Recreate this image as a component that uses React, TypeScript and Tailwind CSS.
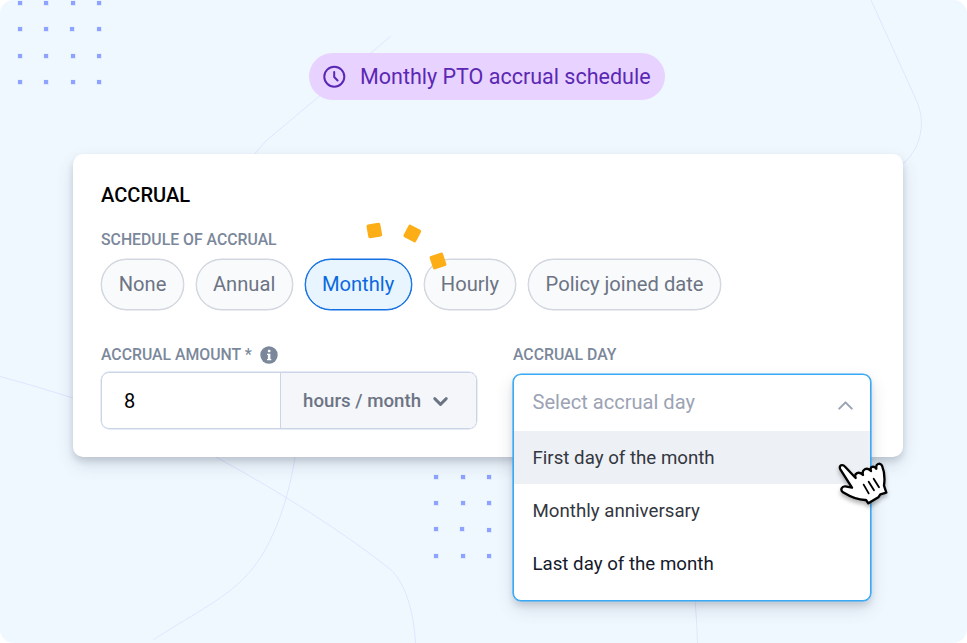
import { ChevronDown, ChevronUp } from "lucide-react";

const schedules = ["None", "Annual", "Monthly", "Hourly", "Policy joined date"];

const dayOptions = [
  { label: "First day of the month", style: "bg-[#edf0f5] text-[#33373f]" },
  { label: "Monthly anniversary", style: "text-[#33373f]" },
  { label: "Last day of the month", style: "text-[#14192b]" },
];

const dots = [
  [18, 1], [44, 1], [71, 1], [97, 1],
  [18, 27], [44, 27], [70, 27], [97, 27],
  [18, 54], [44, 54], [71, 54], [97, 54],
  [18, 80], [44, 80], [71, 80], [97, 80],
  [434, 475], [461, 475], [487, 475],
  [434, 501], [461, 501], [487, 501],
  [434, 527], [460, 527], [487, 528],
  [434, 554], [461, 554], [487, 554],
];

function Backdrop() {
  return (
    <svg className="absolute inset-0" width="967" height="643" viewBox="0 0 967 643" fill="none">
      <g stroke="#e0e5ff" strokeWidth="1">
        <path d="M391 36L267 140Q260 147 254 155" />
        <path d="M871 0L918 104Q922 114 921.500 126Q920 149 903 164" />
        <path d="M0 376.500Q36 386 73 398" />
        <path d="M216 457Q320 514 390 569C405 582 414 612 415.500 643" />
        <path d="M295 457C290 490 276 545 246 576C224 600 186 618 153 640" />
        <path d="M695 600Q697 622 697.500 643" />
      </g>
      {dots.map(([x, y]) => (
        <g key={`${x}-${y}`}>
          <rect x={x - 0.3} y={y - 0.3} width="5" height="5" fill="#8ea2ff" opacity="0.25" />
          <rect x={x} y={y} width="4" height="4" fill="#8ea2ff" />
        </g>
      ))}
    </svg>
  );
}

function ClockIcon() {
  return (
    <svg width="24" height="24" viewBox="0 0 24 24" fill="none" stroke="#5b28b4" strokeWidth="2">
      <circle cx="12.300" cy="11.700" r="10" />
      <path d="M12.200 7V12L15.600 15.500" strokeLinecap="round" strokeLinejoin="round" />
    </svg>
  );
}

function InfoIcon() {
  return (
    <svg width="18" height="18" viewBox="0 0 18 18">
      <circle cx="9" cy="9" r="8.700" fill="#7b889b" />
      <rect x="7.900" y="3.800" width="2.500" height="2.400" fill="#fff" />
      <path d="M7 7.700H10.400V13H11.300V14.300H7V13H7.900V9H7Z" fill="#fff" />
    </svg>
  );
}

function Sparks() {
  return (
    <svg className="absolute left-[288px] top-[64px]" width="90" height="56" viewBox="0 0 90 56" fill="#fdae16">
      <rect x="6.300" y="5.500" width="14" height="14" rx="1.800" transform="rotate(-10 13.300 12.500)" />
      <rect x="44.300" y="8.500" width="14" height="14" rx="1.800" transform="rotate(28 51.300 15.500)" />
      <rect x="70" y="36" width="14" height="14" rx="1.800" transform="rotate(-18 77 43)" />
    </svg>
  );
}

function HandCursor() {
  return (
    <svg
      className="absolute left-[317px] top-[106px] drop-shadow-[0_3px_2px_rgba(0,0,0,0.3)]"
      width="70"
      height="65"
      viewBox="0 0 210 195"
      fill="none"
      stroke="#000"
      strokeWidth="7"
      strokeLinecap="round"
      strokeLinejoin="round"
    >
      <path
        d="M31 58C25 46 37 41 46 51L77 84C71 70 87 62 99 75C94 59 111 49 123 63C118 50 131 46 139 56C136 41 150 37 156 47C164 66 165 85 162 107L169 128L151 133L145 142L115 160L108 150C86 151 62 141 39 127C29 119 36 108 46 109L66 113Z"
        fill="#fff"
      />
      <path d="M101 104L116 130M116 95L132 121M131 86L147 112" strokeWidth="5.500" />
    </svg>
  );
}

export default function App() {
  return (
    <div className="bg-white">
      <div className="relative flex h-[643px] w-[967px] flex-col overflow-hidden rounded-[14px] bg-[#f0f8ff] font-[Roboto,sans-serif]">
        <Backdrop />

        <div className="relative ml-[309px] mt-[53px] flex h-[47px] w-[356px] items-center gap-[14px] rounded-full bg-[#e8d2ff] pl-[13px]">
          <ClockIcon />
          <span className="whitespace-nowrap pt-[2px] text-[21.5px] text-[#5b28b4]">Monthly PTO accrual schedule</span>
        </div>

        <div className="relative ml-[72.5px] mt-[54px] flex h-[303px] w-[830px] flex-col rounded-[10px] bg-white pl-[28.5px] pr-7 shadow-[0_4px_6px_rgba(30,40,60,0.14),0_8px_18px_rgba(30,40,70,0.14)]">
          <h1 className="mt-[29px] text-[20.1px] font-medium leading-6 text-black">ACCRUAL</h1>
          <h2 className="mt-[23px] text-[15.8px] font-medium leading-5 text-[#7b889b]">SCHEDULE OF ACCRUAL</h2>
          <div className="mt-[9px] flex gap-3 pl-[0.4px]">
            {schedules.map((name) => (
              <button
                key={name}
                className={`h-[51px] whitespace-nowrap rounded-full border px-[16.3px] pb-px text-[20.15px] ${
                  name === "Monthly"
                    ? "border-[#1270e3] bg-[#e8f5ff] text-[#0b69df] shadow-[0_0_0_0.4px_#1270e3]"
                    : "border-[#d2d6de] bg-[#f9fafc] text-[#6c7484] shadow-[0_0_0_0.4px_#d2d6de]"
                }`}
              >
                {name}
              </button>
            ))}
          </div>
          <Sparks />

          <div className="mt-[34px] flex gap-9">
            <div className="w-[376px]">
              <div className="flex h-[22px] items-center gap-2 text-[15.8px] font-medium text-[#7b889b]">
                ACCRUAL AMOUNT *
                <InfoIcon />
              </div>
              <div className="mt-[6px] flex h-[57px] overflow-hidden rounded-lg border border-[#cbd5e8] shadow-[0_0_0_0.4px_#cbd5e8]">
                <div className="flex w-[179px] items-center border-r border-[#cbd5e8] pl-[22px] text-[20px] text-black">8</div>
                <div className="flex flex-1 items-center gap-[8px] bg-[#f4f6fa] pl-[22px] pt-px text-[18.7px] font-medium text-[#6c7484]">
                  hours / month
                  <ChevronDown size={23} strokeWidth={3} />
                </div>
              </div>
            </div>

            <div className="relative w-[358px]">
              <div className="flex h-[22px] items-center text-[15.8px] font-medium text-[#7b889b]">ACCRUAL DAY</div>
              <div className="absolute left-0 top-[30px] flex h-[227px] w-[358px] flex-col overflow-hidden rounded-lg border border-[#38a9f6] bg-white shadow-[0_0_0_0.6px_#38a9f6,0_4px_6px_rgba(30,40,60,0.14),0_8px_18px_rgba(30,40,70,0.14)]">
                <div className="flex h-[56px] items-center justify-between pb-px pl-[18.5px] pr-[12px] text-[20.1px] text-[#9ca3b3]">
                  Select accrual day
                  <ChevronUp className="mt-[5px]" size={25} strokeWidth={2} />
                </div>
                {dayOptions.map((option) => (
                  <div key={option.label} className={`flex h-[53px] items-center pl-[18.5px] pt-px text-[18.7px] ${option.style}`}>
                    {option.label}
                  </div>
                ))}
              </div>
              <HandCursor />
            </div>
          </div>
        </div>
      </div>
    </div>
  );
}
